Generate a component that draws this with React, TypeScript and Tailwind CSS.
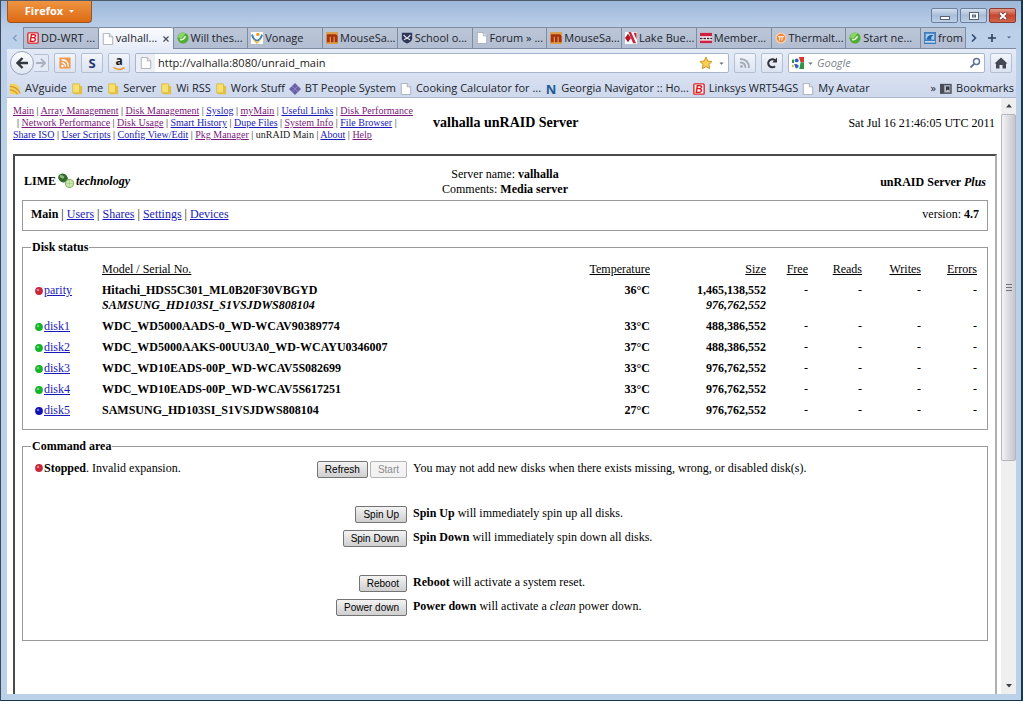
import type { ReactNode } from 'react';

const UI_FONT = "font-['Open_Sans','Noto_Sans',sans-serif]";
const SERIF_FONT = "font-['Liberation_Serif',serif]";

type IconName =
  | 'linksys'
  | 'page'
  | 'green'
  | 'vonage'
  | 'mouse'
  | 'shield'
  | 'lake'
  | 'member'
  | 'thermal'
  | 'from'
  | 'rssFolder'
  | 'folder'
  | 'diamond'
  | 'navigator'
  | 'bookmarks'
  | 'rss'
  | 'google';

function Svg({ children }: { children: ReactNode }) {
  return (
    <svg viewBox="0 0 14 14" className="h-3 w-3 shrink-0" aria-hidden="true">
      {children}
    </svg>
  );
}

function Icon({ name }: { name: IconName }) {
  switch (name) {
    case 'linksys':
      return (
        <Svg>
          <rect x="1" y="1" width="12" height="12" rx="1" fill="#fff" stroke="#d9242b" strokeWidth="1.6" />
          <text x="2.5" y="11.5" fontSize="12" fontWeight="bold" fontStyle="italic" fontFamily="Liberation Sans" fill="#d9141c">B</text>
        </Svg>
      );
    case 'page':
      return (
        <Svg>
          <path d="M1.5 0.5h7l4 4v9h-11z" fill="#fdfdfe" stroke="#a3a8b2" />
          <path d="M8.5 0.5v4h4" fill="#e4e7ee" stroke="#a3a8b2" />
        </Svg>
      );
    case 'green':
      return (
        <Svg>
          <circle cx="7" cy="7" r="6.5" fill="#4fae32" />
          <path d="M1 6a6 6 0 0 1 9-4.5L5 8z" fill="#8dd36d" />
          <path d="M3.5 8.5q3 2 6.500-3.500" fill="none" stroke="#e4f8d8" strokeWidth="1.8" />
        </Svg>
      );
    case 'vonage':
      return (
        <Svg>
          <rect width="14" height="14" fill="#fff" />
          <circle cx="8" cy="2.8" r="2" fill="#f09a1e" />
          <path d="M1 3Q3.500 10 7 10T13 3" fill="none" stroke="#3a7fb8" strokeWidth="2.2" />
          <path d="M3 9l4 4 4-4" fill="none" stroke="#f0b43c" strokeWidth="1.3" />
        </Svg>
      );
    case 'mouse':
      return (
        <Svg>
          <rect x="0" y="0" width="14" height="14" fill="#d9a04e" />
          <path d="M1 12V2.500h10q2.500 0 2.500 3V12H10.200V5.500H8.800V12H5.700V5.500H4.300V12z" fill="#a83010" />
        </Svg>
      );
    case 'shield':
      return (
        <Svg>
          <path d="M1 1h12v6.500Q13 11 7 13.500 1 11 1 7.500z" fill="#2d3657" />
          <path d="M3 3.500 7 7.500l4-4M3.500 9 7 7l3.500 2" fill="none" stroke="#dfe3ee" strokeWidth="1.4" />
        </Svg>
      );
    case 'lake':
      return (
        <Svg>
          <rect width="14" height="14" fill="#fff" />
          <path d="M0 7 3.500 2 7 7l-3.500 5z" fill="#b9142a" />
          <path d="M4 0h3l6 13H9.500zM10 1h3.500v8z" fill="#c9263b" />
        </Svg>
      );
    case 'member':
      return (
        <Svg>
          <rect y="1" width="14" height="12" fill="#fff" />
          <path d="M0 1h14v4H0z" fill="#cf1f43" />
          <path d="M0 7.500h14" stroke="#3b2733" strokeWidth="1.8" strokeDasharray="3 1" />
          <path d="M0 10h14v3H0z" fill="#cf1f43" />
        </Svg>
      );
    case 'thermal':
      return (
        <Svg>
          <circle cx="7" cy="7" r="6.5" fill="#f8d2b4" />
          <circle cx="7" cy="7" r="5" fill="#f08a3c" />
          <path d="M3.500 5.500h7M5.800 5.500 5 10M8.500 5.500 8 10" stroke="#fff" strokeWidth="1.1" fill="none" />
        </Svg>
      );
    case 'from':
      return (
        <Svg>
          <rect x="0" y="0" width="14" height="14" fill="#3f7dbd" />
          <path d="M2 2h10v7H2z" fill="#a8cdec" />
          <path d="M3 9c1-6 6-6 8-5-3 1-3 3-2 5z" fill="#2464a4" />
          <path d="M1 11.500h12" stroke="#e8f2fb" strokeWidth="1.5" />
        </Svg>
      );
    case 'rssFolder':
      return (
        <Svg>
          <path d="M1 1h7l4 4v8H1z" fill="#f0d35a" />
          <path d="M1 8q5 0 9 5M1 4q8 0 12 8" fill="none" stroke="#d9962a" strokeWidth="1.4" />
        </Svg>
      );
    case 'folder':
      return (
        <Svg>
          <path d="M2 1h8v10.500H2z" fill="#f8e070" stroke="#d8b840" />
          <path d="M10 3.500h3v9.500H4l-2-1.500h8z" fill="#e3bf40" />
        </Svg>
      );
    case 'diamond':
      return (
        <Svg>
          <path d="M7 0 14 7 7 14 0 7z" fill="#6a62a8" />
          <path d="M3.500 3.500l7 7M10.500 3.500l-7 7" stroke="#8d87c2" />
        </Svg>
      );
    case 'navigator':
      return (
        <span className="w-3 shrink-0 text-center text-[13px] leading-4 font-bold text-[#1f5c96]" aria-hidden="true">
          N
        </span>
      );
    case 'bookmarks':
      return (
        <Svg>
          <rect x="0.8" y="1.8" width="12" height="10" fill="#b9bfca" stroke="#474c56" strokeWidth="1.6" />
          <path d="M1 2h4v10H1z" fill="#474c56" />
          <path d="M7 4h4v5L9 7.500 7 9z" fill="#30343c" />
        </Svg>
      );
    case 'rss':
      return (
        <Svg>
          <rect x="0.5" y="0.5" width="13" height="13" rx="1" fill="#ee9a4d" />
          <circle cx="4" cy="10.5" r="1.4" fill="#fff" />
          <path d="M3 6.500q4.500 0 4.500 5M3 3.200q8 0 8 8.300" fill="none" stroke="#fff" strokeWidth="1.5" />
        </Svg>
      );
    case 'google':
      return (
        <Svg>
          <rect width="14" height="14" fill="#fff" />
          <path d="M8 0h6v6H10z" fill="#d8382c" />
          <path d="M10 6h4v8H8.500z" fill="#2f9444" />
          <path d="M0 3h2.500v4H0z" fill="#2f9444" />
          <circle cx="5.5" cy="4" r="2.2" fill="#2c5fc0" />
          <path d="M2.500 8.500q4-1 5 1.500t-3 3.500z" fill="#2c5fc0" />
          <path d="M0 9h2v3H0z" fill="#e8b92e" />
        </Svg>
      );
  }
}

const tabs: { icon: IconName; label: string; active?: boolean }[] = [
  { icon: 'linksys', label: 'DD-WRT ...' },
  { icon: 'page', label: 'valhall...', active: true },
  { icon: 'green', label: 'Will thes...' },
  { icon: 'vonage', label: 'Vonage' },
  { icon: 'mouse', label: 'MouseSa...' },
  { icon: 'shield', label: 'School o...' },
  { icon: 'page', label: 'Forum » ...' },
  { icon: 'mouse', label: 'MouseSa...' },
  { icon: 'lake', label: 'Lake Bue...' },
  { icon: 'member', label: 'Member...' },
  { icon: 'thermal', label: 'Thermalt...' },
  { icon: 'green', label: 'Start ne...' },
];

const bookmarks: { icon: IconName; label: string }[] = [
  { icon: 'rssFolder', label: 'AVguide' },
  { icon: 'folder', label: 'me' },
  { icon: 'folder', label: 'Server' },
  { icon: 'folder', label: 'Wi RSS' },
  { icon: 'folder', label: 'Work Stuff' },
  { icon: 'diamond', label: 'BT People System' },
  { icon: 'page', label: 'Cooking Calculator for ...' },
  { icon: 'navigator', label: 'Georgia Navigator :: Ho...' },
  { icon: 'linksys', label: 'Linksys WRT54GS' },
  { icon: 'page', label: 'My Avatar' },
];

function TitleBar() {
  return (
    <div className="flex h-[26px] items-start justify-between">
      <button className="flex h-[22px] w-[85px] items-center justify-center gap-1.5 rounded-b-sm border border-t-0 border-[#9c5420] bg-linear-to-b from-[#ee9440] to-[#dd6a10] text-[11px] font-bold text-white">
        Firefox
        <svg viewBox="0 0 6 4" className="h-[3px] w-[5px]" aria-hidden="true">
          <path d="M0 0h6L3 3.500z" fill="#fff" />
        </svg>
      </button>
      <div className="flex gap-0.5 pt-[7px]">
        <button aria-label="Minimize" className="flex h-[15px] w-[27px] items-center justify-center rounded-xs border border-[#6c809c] bg-linear-to-b from-[#d3e0f0] via-[#a9bdd8] to-[#bdd0e6]">
          <svg viewBox="0 0 10 8" className="h-2 w-2.5">
            <rect x="0.5" y="4.5" width="9" height="3" fill="#fff" stroke="#55637a" />
          </svg>
        </button>
        <button aria-label="Restore" className="flex h-[15px] w-[27px] items-center justify-center rounded-xs border border-[#6c809c] bg-linear-to-b from-[#d3e0f0] via-[#a9bdd8] to-[#bdd0e6]">
          <svg viewBox="0 0 10 8" className="h-2 w-2.5">
            <rect x="0.5" y="0.5" width="9" height="7" fill="#fff" stroke="#55637a" />
            <rect x="3.5" y="3" width="3" height="2" fill="#a9bdd8" stroke="#55637a" />
          </svg>
        </button>
        <button aria-label="Close" className="flex h-[15px] w-[27px] items-center justify-center rounded-xs border border-[#8a3a30] bg-linear-to-b from-[#e09c8c] via-[#c8452e] to-[#d0644a]">
          <svg viewBox="0 0 10 8" className="h-2 w-2.5">
            <path d="M1.500 0.500 8.500 7.500M8.500 0.500 1.500 7.500" stroke="#6d3a38" strokeWidth="3.4" />
            <path d="M2 1 8 7M8 1 2 7" stroke="#fff" strokeWidth="2" />
          </svg>
        </button>
      </div>
    </div>
  );
}

function TabStrip() {
  return (
    <div className="flex h-[22px] text-[11px] text-[#20242c]" role="tablist">
      <button aria-label="Scroll tabs left" className="flex w-4 items-center justify-center">
        <svg viewBox="0 0 6 8" className="h-2 w-1.5">
          <path d="M4.500 1 1.500 4l3 3" fill="none" stroke="#7d9cc4" strokeWidth="1.3" />
        </svg>
      </button>
      {tabs.map((tab, i) => (
        <button
          key={i}
          role="tab"
          aria-selected={!!tab.active}
          className={`flex min-w-0 flex-1 items-center gap-0.5 border-t border-l border-[#7e8ca3] pl-[3px] whitespace-nowrap ${
            tab.active
              ? 'rounded-t-xs bg-linear-to-b from-[#fafbfe] to-[#e6ecf8]'
              : 'border-b bg-linear-to-b from-[#bcc6d8] to-[#b2bdd1]'
          }`}
        >
          <Icon name={tab.icon} />
          {tab.label}
          {tab.active && (
            <svg viewBox="0 0 6 6" className="mr-1 ml-auto h-1.5 w-1.5 shrink-0">
              <path d="M0.500 0.500l5 5M5.500 0.500l-5 5" stroke="#4a4f5a" strokeWidth="1.2" />
            </svg>
          )}
        </button>
      ))}
      <button role="tab" aria-selected={false} className="flex w-[46px] items-center gap-0.5 border border-[#7e8ca3] bg-linear-to-b from-[#bcc6d8] to-[#b2bdd1] pl-[3px] whitespace-nowrap">
        <Icon name="from" />
        from
      </button>
      <div className="flex w-[50px] items-center justify-around border-b border-[#7e8ca3]">
        <button aria-label="Scroll tabs right">
          <svg viewBox="0 0 6 8" className="h-2 w-1.5">
            <path d="M1 0.500 4.500 4 1 7.500" fill="none" stroke="#2f4d78" strokeWidth="1.6" />
          </svg>
        </button>
        <button aria-label="New tab">
          <svg viewBox="0 0 8 8" className="h-2 w-2">
            <path d="M4 0v8M0 4h8" stroke="#2f3f58" strokeWidth="1.6" />
          </svg>
        </button>
        <button aria-label="List all tabs">
          <svg viewBox="0 0 6 4" className="h-[3px] w-1">
            <path d="M0 0.500h6L3 3.500z" fill="#4b6385" />
          </svg>
        </button>
      </div>
    </div>
  );
}

function ToolButton({ label, children }: { label: string; children: ReactNode }) {
  return (
    <button
      aria-label={label}
      className="flex h-5 w-[22px] shrink-0 items-center justify-center rounded-xs border border-[#b4bfd2] bg-linear-to-b from-[#f2f5fb] to-[#dce3f1]"
    >
      {children}
    </button>
  );
}

function NavBar() {
  return (
    <div className="flex h-7 items-center gap-[5px] pr-1 pl-[3px]">
      <div className="flex items-center">
        <button aria-label="Back" className="flex h-6 w-6 items-center justify-center rounded-full border border-[#98a5bc] bg-linear-to-b from-[#fbfcfe] to-[#dfe6f2]">
          <svg viewBox="0 0 12 12" className="h-3 w-3">
            <path d="M6.500 1 1.500 6l5 5M2 6h10" fill="none" stroke="#33383f" strokeWidth="2.4" />
          </svg>
        </button>
        <button aria-label="Forward" className="flex h-[18px] w-[15px] items-center justify-center rounded-r-xs border border-l-0 border-[#b4bfd2] bg-[#e3e9f5]">
          <svg viewBox="0 0 12 12" className="h-2.5 w-2.5">
            <path d="M6 1 11 6l-5 5M0 6h10" fill="none" stroke="#aab2c0" strokeWidth="2.2" />
          </svg>
        </button>
      </div>
      <ToolButton label="Subscribe">
        <Icon name="rss" />
      </ToolButton>
      <ToolButton label="Shopping">
        <span className="text-[13px] leading-4 font-bold text-[#21386e]">S</span>
      </ToolButton>
      <ToolButton label="Amazon">
        <span className="flex flex-col items-center">
          <span className="text-[12px] leading-3 font-bold text-[#1c1c1c]">a</span>
          <svg viewBox="0 0 12 4" className="h-1 w-3">
            <path d="M0.500 0.500q6 4 11 0" fill="none" stroke="#e9952b" strokeWidth="1.5" />
          </svg>
        </span>
      </ToolButton>

      <div className="flex h-5 min-w-0 flex-1 items-center rounded-xs border border-[#a9b6ca] bg-white pr-1">
        <span className="flex h-full w-[19px] shrink-0 items-center justify-center bg-[#eceff6]">
          <Icon name="page" />
        </span>
        <input
          aria-label="Location"
          type="text"
          defaultValue="http://valhalla:8080/unraid_main"
          className="ml-[3px] min-w-0 flex-1 text-[11px] text-[#1c1c1c] outline-none"
        />
        <button aria-label="Bookmark this page" className="flex items-center gap-1.5">
          <svg viewBox="0 0 14 14" className="h-3.5 w-3.5">
            <path d="M7 1l1.800 4 4.200.5-3.100 2.900.8 4.300L7 10.600l-3.700 2.100.8-4.300L1 5.500l4.200-.5z" fill="#f8cf52" stroke="#cc952a" />
          </svg>
          <svg viewBox="0 0 6 4" className="h-[3px] w-[5px]">
            <path d="M0 0.500h6L3 3.500z" fill="#6b7180" />
          </svg>
        </button>
      </div>
      <ToolButton label="Feeds">
        <svg viewBox="0 0 12 12" className="h-3 w-3">
          <circle cx="2.5" cy="9.5" r="1.4" fill="#a5abb6" />
          <path d="M1 5.500q5.500 0 5.500 5.500M1 2q9 0 9 9" fill="none" stroke="#a5abb6" strokeWidth="1.8" />
        </svg>
      </ToolButton>
      <ToolButton label="Reload">
        <svg viewBox="0 0 12 12" className="h-3 w-3">
          <path d="M9 9.200A4 4 0 1 1 9 3.300" fill="none" stroke="#30353d" strokeWidth="2.2" />
          <path d="M11 0.500V5.500H6.200z" fill="#30353d" />
        </svg>
      </ToolButton>
      <div className="flex h-5 w-[197px] items-center rounded-xs border border-[#a9b6ca] bg-white px-[3px]">
        <Icon name="google" />
        <svg viewBox="0 0 6 4" className="ml-1 h-[3px] w-[5px] shrink-0" aria-hidden="true">
          <path d="M0 0.500h6L3 3.500z" fill="#6b7180" />
        </svg>
        <input aria-label="Search" type="text" placeholder="Google" className="ml-1 min-w-0 flex-1 text-[11px] italic outline-none placeholder:text-[#7d828b]" />
        <button aria-label="Search the web">
          <svg viewBox="0 0 12 12" className="h-3 w-3">
            <circle cx="7.5" cy="4.5" r="3" fill="none" stroke="#5f7396" strokeWidth="1.5" />
            <path d="M5.300 6.700 1.500 10.500" stroke="#5f7396" strokeWidth="1.9" />
          </svg>
        </button>
      </div>
      <ToolButton label="Home">
        <svg viewBox="0 0 14 12" className="h-3 w-3.5">
          <path d="M7 0.500 13.500 6.500H12V11.500H8.500V8h-3v3.500H2V6.500H0.500z" fill="#434851" />
        </svg>
      </ToolButton>
    </div>
  );
}

function BookmarksBar() {
  return (
    <div className="flex h-[21px] items-center justify-between border-b border-[#a9b8d0] px-0.5 pt-[3px] text-[11px] whitespace-nowrap text-[#20242c]">
      <div className="flex gap-1">
        {bookmarks.map((b) => (
          <a key={b.label} href="#" className="flex items-center gap-1">
            <Icon name={b.icon} />
            {b.label}
          </a>
        ))}
      </div>
      <div className="flex items-center gap-1">
        <span>»</span>
        <button className="flex items-center gap-1">
          <Icon name="bookmarks" />
          Bookmarks
        </button>
      </div>
    </div>
  );
}

type NavItem = { label: string; visited?: boolean; plain?: boolean };

const navRows: { items: NavItem[]; lead?: boolean; trail?: boolean }[] = [
  {
    items: [
      { label: 'Main', visited: true },
      { label: 'Array Management', visited: true },
      { label: 'Disk Management', visited: true },
      { label: 'Syslog' },
      { label: 'myMain', visited: true },
      { label: 'Useful Links' },
      { label: 'Disk Performance', visited: true },
    ],
  },
  {
    lead: true,
    trail: true,
    items: [
      { label: 'Network Performance', visited: true },
      { label: 'Disk Usage', visited: true },
      { label: 'Smart History' },
      { label: 'Dupe Files' },
      { label: 'System Info', visited: true },
      { label: 'File Browser' },
    ],
  },
  {
    items: [
      { label: 'Share ISO' },
      { label: 'User Scripts' },
      { label: 'Config View/Edit' },
      { label: 'Pkg Manager', visited: true },
      { label: 'unRAID Main', plain: true },
      { label: 'About' },
      { label: 'Help', visited: true },
    ],
  },
];

function PageHeader() {
  return (
    <div className="grid grid-cols-[400px_1fr_auto] items-start pt-[7px]">
      <nav className="text-[10px] leading-3 whitespace-nowrap text-[#1a1a1a]">
        {navRows.map((row, r) => (
          <div key={r}>
            {row.lead && <span className="pl-1">| </span>}
            {row.items.map((item, i) => (
              <span key={item.label}>
                {i > 0 && ' | '}
                {item.plain ? (
                  item.label
                ) : (
                  <a href="#" className={`underline ${item.visited ? 'text-[#7a1a7a]' : 'text-[#1a1ab8]'}`}>
                    {item.label}
                  </a>
                )}
              </span>
            ))}
            {row.trail && ' |'}
          </div>
        ))}
      </nav>
      <h1 className="pt-2.5 pl-5 text-[14px] leading-4 font-bold">valhalla unRAID Server</h1>
      <div className="pt-2.5 pr-0.5 text-[12px] leading-4">Sat Jul 16 21:46:05 UTC 2011</div>
    </div>
  );
}

function Ball({ color }: { color: 'red' | 'green' | 'blue' }) {
  const fill = { red: '#c8283c', green: '#14b428', blue: '#1010b4' }[color];
  return (
    <svg viewBox="0 0 8 8" className="inline-block h-2 w-2 shrink-0" aria-hidden="true">
      <circle cx="4" cy="4" r="3.9" fill={fill} />
      <circle cx="3" cy="3" r="1.3" fill="#fff" opacity="0.4" />
    </svg>
  );
}

const disks: {
  name: string;
  color: 'red' | 'green' | 'blue';
  model: string;
  oldModel?: string;
  temp: string;
  size: string;
  oldSize?: string;
}[] = [
  {
    name: 'parity',
    color: 'red',
    model: 'Hitachi_HDS5C301_ML0B20F30VBGYD',
    oldModel: 'SAMSUNG_HD103SI_S1VSJDWS808104',
    temp: '36°C',
    size: '1,465,138,552',
    oldSize: '976,762,552',
  },
  { name: 'disk1', color: 'green', model: 'WDC_WD5000AADS-0_WD-WCAV90389774', temp: '33°C', size: '488,386,552' },
  { name: 'disk2', color: 'green', model: 'WDC_WD5000AAKS-00UU3A0_WD-WCAYU0346007', temp: '37°C', size: '488,386,552' },
  { name: 'disk3', color: 'green', model: 'WDC_WD10EADS-00P_WD-WCAV5S082699', temp: '33°C', size: '976,762,552' },
  { name: 'disk4', color: 'green', model: 'WDC_WD10EADS-00P_WD-WCAV5S617251', temp: '33°C', size: '976,762,552' },
  { name: 'disk5', color: 'blue', model: 'SAMSUNG_HD103SI_S1VSJDWS808104', temp: '27°C', size: '976,762,552' },
];

function DiskStatus() {
  return (
    <fieldset className="mt-[9px] border border-[#9a9a9a] pr-[10px] pb-2 pl-3">
      <legend className="-ml-1 px-px leading-[14px] font-bold">Disk status</legend>
      <table className="mt-[5px] w-full table-fixed leading-[15px]">
        <thead>
          <tr className="text-right underline">
            <th className="w-[67px]" aria-label="Disk"></th>
            <th className="py-[3px] text-left font-normal">Model / Serial No.</th>
            <th className="w-[100px] font-normal">Temperature</th>
            <th className="w-[116px] font-normal">Size</th>
            <th className="w-[42px] font-normal">Free</th>
            <th className="w-[54px] font-normal">Reads</th>
            <th className="w-[59px] font-normal">Writes</th>
            <th className="w-[56px] font-normal">Errors</th>
          </tr>
        </thead>
        <tbody>
          {disks.map((disk) => (
            <tr key={disk.name} className="text-right align-top">
              <td className="py-[3px] text-left">
                <span className="flex items-center gap-px">
                  <Ball color={disk.color} />
                  <a href="#" className="text-[#1a1ab8] underline">{disk.name}</a>
                </span>
              </td>
              <td className="py-[3px] text-left font-bold whitespace-nowrap">
                {disk.model}
                {disk.oldModel && <div className="italic">{disk.oldModel}</div>}
              </td>
              <td className="py-[3px] font-bold">{disk.temp}</td>
              <td className="py-[3px] font-bold">
                {disk.size}
                {disk.oldSize && <div className="italic">{disk.oldSize}</div>}
              </td>
              <td className="py-[3px]">-</td>
              <td className="py-[3px]">-</td>
              <td className="py-[3px]">-</td>
              <td className="py-[3px]">-</td>
            </tr>
          ))}
        </tbody>
      </table>
    </fieldset>
  );
}

function FormButton({ children, disabled }: { children: ReactNode; disabled?: boolean }) {
  return (
    <button
      disabled={disabled}
      className="h-[17px] rounded-xs border border-[#747474] bg-linear-to-b from-[#f3f3f3] to-[#cfcfcf] px-[7px] font-['Liberation_Sans',sans-serif] text-[10px] leading-[15px] text-black disabled:border-[#b4b4b4] disabled:from-[#f6f6f6] disabled:to-[#f1f1f1] disabled:text-[#8c8c8c]"
    >
      {children}
    </button>
  );
}

function CommandRow({ status, buttons, children }: { status?: ReactNode; buttons: ReactNode; children: ReactNode }) {
  return (
    <div className="grid h-6 grid-cols-[281px_91px_1fr] items-center">
      <div className="flex items-center gap-px pb-0.5">{status}</div>
      <div className="flex justify-end gap-0.5 whitespace-nowrap">{buttons}</div>
      <div className="pb-0.5 pl-1.5">{children}</div>
    </div>
  );
}

function CommandArea() {
  return (
    <fieldset className="mt-[9px] border border-[#9a9a9a] pr-[10px] pb-[21px] pl-3">
      <legend className="-ml-1 px-px leading-[14px] font-bold">Command area</legend>
      <div className="mt-1 flex flex-col gap-[21px] leading-[15px]">
        <CommandRow
          status={
            <>
              <Ball color="red" />
              <span>
                <b>Stopped</b>. Invalid expansion.
              </span>
            </>
          }
          buttons={
            <>
              <FormButton>Refresh</FormButton>
              <FormButton disabled>Start</FormButton>
            </>
          }
        >
          You may not add new disks when there exists missing, wrong, or disabled disk(s).
        </CommandRow>
        <div>
          <CommandRow buttons={<FormButton>Spin Up</FormButton>}>
            <b>Spin Up</b> will immediately spin up all disks.
          </CommandRow>
          <CommandRow buttons={<FormButton>Spin Down</FormButton>}>
            <b>Spin Down</b> will immediately spin down all disks.
          </CommandRow>
        </div>
        <div>
          <CommandRow buttons={<FormButton>Reboot</FormButton>}>
            <b>Reboot</b> will activate a system reset.
          </CommandRow>
          <CommandRow buttons={<FormButton>Power down</FormButton>}>
            <b>Power down</b> will activate a <i>clean</i> power down.
          </CommandRow>
        </div>
      </div>
    </fieldset>
  );
}

function UnraidFrame() {
  return (
    <main className="mt-[13px] flex-1 border-t-2 border-r-2 border-l-2 border-[#4a4a4a] border-r-[#b0b0b0] px-[7px] text-[12px]">
      <header className="grid h-11 grid-cols-3 items-center px-0.5 pt-2">
        <div className="flex items-center pb-0.5 font-bold">
          LIME
          <svg viewBox="0 0 18 16" className="mx-px h-4 w-[18px]" role="img" aria-label="Limes">
            <ellipse cx="6" cy="5" rx="5" ry="4.2" transform="rotate(30 6 5)" fill="#2f6b2a" />
            <ellipse cx="5" cy="3.8" rx="2.5" ry="1.5" transform="rotate(25 5 3.8)" fill="#8fb882" />
            <circle cx="12.5" cy="10.5" r="4.6" fill="#7fb75c" />
            <circle cx="12.5" cy="10.5" r="3.5" fill="#cfe6b4" />
            <path d="M12.500 7.500v6M9.500 10.500h6" stroke="#a3cf84" strokeWidth="0.7" />
          </svg>
          <i>technology</i>
        </div>
        <div className="text-center leading-[15px]">
          Server name: <b>valhalla</b>
          <br />
          Comments: <b>Media server</b>
        </div>
        <div className="text-right font-bold">
          unRAID Server <i>Plus</i>
        </div>
      </header>

      <nav className="flex h-[31px] items-center justify-between border border-[#9a9a9a] px-2 pb-1">
        <div>
          <b>Main</b>
          {['Users', 'Shares', 'Settings', 'Devices'].map((label) => (
            <span key={label}>
              {' | '}
              <a href="#" className="text-[#1a1ab8] underline">{label}</a>
            </span>
          ))}
        </div>
        <div>
          version: <b>4.7</b>
        </div>
      </nav>

      <DiskStatus />
      <CommandArea />
    </main>
  );
}

function ScrollBar() {
  return (
    <div className="flex w-[15px] shrink-0 flex-col items-center bg-[#efefef]">
      <button aria-label="Scroll up" className="flex h-4 w-full items-center justify-center">
        <svg viewBox="0 0 6 4" className="h-1 w-1.5">
          <path d="M0 3.500h6L3 0z" fill="#3f4248" />
        </svg>
      </button>
      <div className="flex w-full flex-[346] flex-col items-center justify-center gap-0.5 rounded-xs border border-[#b4b6bc] bg-linear-to-r from-[#f4f4f5] via-[#dcdce0] to-[#c6c7cd]">
        <span className="h-px w-1.5 bg-[#6e7178]"></span>
        <span className="h-px w-1.5 bg-[#6e7178]"></span>
        <span className="h-px w-1.5 bg-[#6e7178]"></span>
      </div>
      <div className="flex-[218]"></div>
      <button aria-label="Scroll down" className="flex h-4 w-full items-center justify-center">
        <svg viewBox="0 0 6 4" className="h-1 w-1.5">
          <path d="M0 0h6L3 3.500z" fill="#3f4248" />
        </svg>
      </button>
    </div>
  );
}

export default function App() {
  return (
    <div className={`flex h-screen flex-col overflow-hidden border-r-2 border-b border-l border-[#17374f] border-l-[#3d4a5e] bg-[#bad1e8] pr-[5px] pb-1.5 pl-1.5 ${UI_FONT}`}>
      <div className="-mr-[5px] -ml-1.5 border-t border-[#4f5b6d] bg-linear-to-b from-[#9db8d9] to-[#bdd0e9] to-30% pr-[5px] pl-1.5">
        <TitleBar />
        <TabStrip />
        <div className="bg-linear-to-b from-[#e4ebf7] to-[#cdd8ec]">
          <NavBar />
          <BookmarksBar />
        </div>
      </div>
      <div className={`flex min-h-0 flex-1 bg-white text-black ${SERIF_FONT}`}>
        <div className="flex min-w-0 flex-1 flex-col pr-1 pl-1.5">
          <PageHeader />
          <UnraidFrame />
        </div>
        <ScrollBar />
      </div>
    </div>
  );
}
